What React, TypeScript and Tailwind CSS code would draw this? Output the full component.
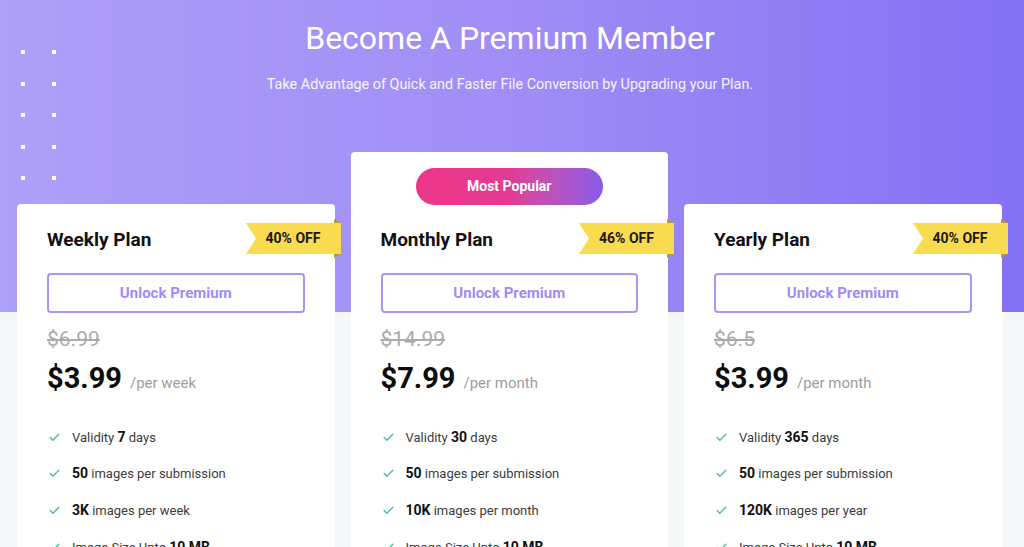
import { Check } from 'lucide-react';
import { ReactNode } from 'react';

type Plan = {
    name: string;
    off: string;
    oldPrice: string;
    price: string;
    period: string;
    popular?: boolean;
    features: ReactNode[];
};

const PLANS: Plan[] = [
    {
        name: 'Weekly Plan',
        off: '40% OFF',
        oldPrice: '$6.99',
        price: '$3.99',
        period: '/per week',
        features: [
            <>Validity <b>7</b> days</>,
            <><b>50</b> images per submission</>,
            <><b>3K</b> images per week</>,
            <>Image Size Upto <b>10 MB</b></>,
        ],
    },
    {
        name: 'Monthly Plan',
        off: '46% OFF',
        oldPrice: '$14.99',
        price: '$7.99',
        period: '/per month',
        popular: true,
        features: [
            <>Validity <b>30</b> days</>,
            <><b>50</b> images per submission</>,
            <><b>10K</b> images per month</>,
            <>Image Size Upto <b>10 MB</b></>,
        ],
    },
    {
        name: 'Yearly Plan',
        off: '40% OFF',
        oldPrice: '$6.5',
        price: '$3.99',
        period: '/per month',
        features: [
            <>Validity <b>365</b> days</>,
            <><b>50</b> images per submission</>,
            <><b>120K</b> images per year</>,
            <>Image Size Upto <b>10 MB</b></>,
        ],
    },
];

function Ribbon({ label }: { label: string }) {
    return (
        <div className="absolute right-[-7px] top-[15px] h-[39px] w-[96px]">
            <svg width="96" height="39" viewBox="0 0 96 39" className="absolute inset-0">
                <polygon points="88,0 95,4 88,4" fill="#b99d2b" />
                <polygon points="88,39 95,35 88,35" fill="#b99d2b" />
                <polygon points="0,4 95,4 95,35 0,35 10,19.5" fill="#f9db4f" />
            </svg>
            <span className="relative flex h-full items-center pl-[20px] text-[14px] font-bold text-[#1a1a1a]">
                {label}
            </span>
        </div>
    );
}

function PlanCard({ plan }: { plan: Plan }) {
    return (
        <div
            className={`relative w-[317.5px] shrink-0 rounded-[4px] bg-white pb-10 ${plan.popular ? '' : 'mt-[52px]'}`}
        >
            {plan.popular && (
                <div className="flex h-[52px] justify-center pt-4">
                    <div className="flex h-[37px] w-[187px] items-center justify-center rounded-full bg-gradient-to-r from-[#ee3689] via-[#e23a92] to-[#8a59ea] text-[14px] font-bold text-white">
                        Most Popular
                    </div>
                </div>
            )}
            <div className="relative px-[30px] pt-[24px]">
                <Ribbon label={plan.off} />
                <h3 className="text-[19px] font-bold leading-6 text-[#111]">{plan.name}</h3>
                <button className="mt-[21px] flex h-[40px] w-full items-center justify-center rounded-[4px] border-2 border-[#a896f7] text-[15px] font-bold text-[#a08cf6]">
                    Unlock Premium
                </button>
                <p className="mt-3 text-[21px] leading-7 text-[#ababab] line-through">{plan.oldPrice}</p>
                <p className="mt-[7px] flex items-baseline leading-9">
                    <span className="text-[29px] font-bold text-[#0d0d0d]">{plan.price}</span>
                    <span className="ml-[8px] text-[15px] text-[#9d9d9d]">{plan.period}</span>
                </p>
                <ul className="mt-[26px] flex flex-col gap-[16.7px]">
                    {plan.features.map((f, i) => (
                        <li key={i} className="flex h-5 items-center">
                            <Check size={13} strokeWidth={2.5} className="ml-[1px] text-[#4dbb9f]" />
                            <span className="ml-[11px] text-[13px] text-[#3c3c3c] [&_b]:text-[14px] [&_b]:font-bold [&_b]:text-[#111]">
                                {f}
                            </span>
                        </li>
                    ))}
                </ul>
            </div>
        </div>
    );
}

export default function App() {
    return (
        <div className="h-screen overflow-hidden bg-[#f4f8f9] font-['Roboto',sans-serif]">
            <header className="relative h-[312px] bg-gradient-to-r from-[#ae9ff8] via-[#a08df6] to-[#8470f3] text-center text-white">
                <div className="absolute left-[21px] top-[50px] grid grid-cols-2 gap-x-[27px] gap-y-[27.5px]">
                    {Array.from({ length: 10 }).map((_, i) => (
                        <span key={i} className="block h-[4px] w-[4px] bg-white" />
                    ))}
                </div>
                <h1 className="pt-[18px] pr-[4px] text-[32px] leading-10 font-normal">Become A Premium Member</h1>
                <p className="mt-[17px] pr-[4px] text-[14.4px] leading-5 text-white/90">
                    Take Advantage of Quick and Faster File Conversion by Upgrading your Plan.
                </p>
            </header>
            <main className="mt-[-160px] flex items-start gap-4 pl-[17px]">
                {PLANS.map((p) => (
                    <PlanCard key={p.name} plan={p} />
                ))}
            </main>
        </div>
    );
}
